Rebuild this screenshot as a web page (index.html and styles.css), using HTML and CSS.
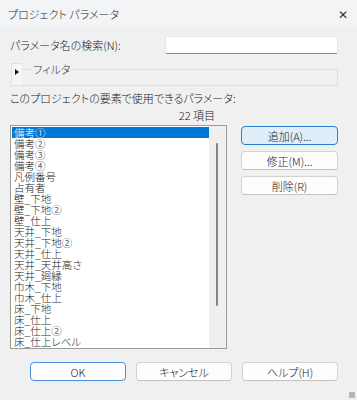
FILE: index.html
```html
<!DOCTYPE html>
<html lang="ja">
<head>
    <meta charset="UTF-8">
    <meta name="viewport" content="width=device-width, initial-scale=1.0">
    <title>プロジェクト パラメータ</title>
    <link rel="stylesheet" href="styles.css">
</head>
<body>

<div class="ventana">
    <div class="titulo">
        <span>プロジェクト パラメータ</span>
        <span class="cerrar">✕</span>
    </div>

    <div class="contenido">
        <div class="busqueda">
            <label>パラメータ名の検索(N):</label>
            <input type="text" class="campo">
        </div>

        <div class="filtro">
            <div class="toggle"><span class="flecha"></span></div>
            <div class="grupo">
                <span class="leyenda">フィルタ</span>
            </div>
        </div>

        <div class="etiqueta">このプロジェクトの要素で使用できるパラメータ:</div>
        <div class="cuenta">22 項目</div>

        <div class="principal">
            <div class="lista">
                <ul class="items">
                    <li class="sel">備考①</li>
                    <li>備考②</li>
                    <li>備考③</li>
                    <li>備考④</li>
                    <li>凡例番号</li>
                    <li>占有者</li>
                    <li>壁_下地</li>
                    <li>壁_下地②</li>
                    <li>壁_仕上</li>
                    <li>天井_下地</li>
                    <li>天井_下地②</li>
                    <li>天井_仕上</li>
                    <li>天井_天井高さ</li>
                    <li>天井_廻縁</li>
                    <li>巾木_下地</li>
                    <li>巾木_仕上</li>
                    <li>床_下地</li>
                    <li>床_仕上</li>
                    <li>床_仕上②</li>
                    <li>床_仕上レベル</li>
                </ul>
                <div class="scroll"><div class="thumb"></div></div>
            </div>

            <div class="acciones">
                <button class="btn activo">追加(A)...</button>
                <button class="btn">修正(M)...</button>
                <button class="btn">削除(R)</button>
            </div>
        </div>

        <div class="pie">
            <button class="btn defecto">OK</button>
            <button class="btn">キャンセル</button>
            <button class="btn">ヘルプ(H)</button>
        </div>
    </div>
    <div class="grip"></div>
</div>

</body>
</html>
```

FILE: styles.css
```css
body {
    margin: 0;
    font-family: "Noto Sans CJK JP", sans-serif;
    font-size: 11px;
    font-weight: 300;
    font-feature-settings: "palt";
    color: #1a1a1a;
    background-color: #f0f0f0;
}
.ventana {
    position: relative;
    width: 357px;
    height: 400px;
    background-color: #f0f0f0;
    overflow: hidden;
}
.titulo {
    height: 27px;
    display: flex;
    align-items: center;
    justify-content: space-between;
    padding: 0 8px;
    background-color: #f3f4f6;
    color: #2a2a2a;
}
.cerrar {
    font-size: 12px;
    color: #333;
    margin-right: 1px;
}
.contenido {
    padding: 0 19px 0 10px;
}
.busqueda {
    margin-top: 9px;
    display: flex;
    align-items: center;
    justify-content: space-between;
    height: 18px;
}
.campo {
    width: 173px;
    height: 18px;
    box-sizing: border-box;
    border: 1px solid #e5e5e5;
    border-bottom: 1px solid #868686;
    border-radius: 2px;
    background: #fff;
    margin: 0;
}
.filtro {
    margin-top: 9px;
    margin-left: 1px;
    display: flex;
    align-items: flex-start;
    height: 22px;
}
.toggle {
    width: 10px;
    height: 21px;
    border: 1px solid #e0e0e0;
    border-right: none;
    background-color: #f5f5f5;
    display: flex;
    align-items: center;
    justify-content: center;
}
.flecha {
    width: 0;
    height: 0;
    border-top: 3px solid transparent;
    border-bottom: 3px solid transparent;
    border-left: 4px solid #111;
    margin-top: -5px;
}
.grupo {
    flex: 1;
    height: 15px;
    margin-top: 6px;
    border: 1px solid #dcdcdc;
    border-left: none;
}
.leyenda {
    display: inline-block;
    margin-top: -7px;
    margin-left: 9px;
    padding: 0 2px;
    line-height: 12px;
    background-color: #f0f0f0;
    color: #333;
    vertical-align: top;
}
.etiqueta {
    margin-top: 7px;
    line-height: 12px;
}
.cuenta {
    width: 217px;
    text-align: right;
    padding-right: 12px;
    box-sizing: border-box;
    margin-top: 5px;
    line-height: 12px;
}
.principal {
    margin-top: 4px;
    display: flex;
    align-items: flex-start;
}
.lista {
    width: 217px;
    height: 224px;
    box-sizing: border-box;
    border: 1px solid #9a9a9a;
    background-color: #fff;
    display: flex;
    overflow: hidden;
}
.items {
    list-style: none;
    margin: 0;
    padding: 1px 0 0 1px;
    flex: 1;
    font-size: 10.5px;
}
.items li {
    height: 11px;
    line-height: 11px;
    padding-left: 2px;
    white-space: nowrap;
}
.items li.sel {
    background-color: #0078d7;
    color: #fff;
}
.scroll {
    width: 17px;
    background-color: #efefef;
    position: relative;
}
.thumb {
    position: absolute;
    left: 7px;
    top: 17px;
    width: 2px;
    height: 163px;
    background-color: #858585;
    border-radius: 1px;
}
.acciones {
    margin-left: 14px;
    margin-top: 1px;
    display: flex;
    flex-direction: column;
    gap: 6px;
}
.btn {
    width: 97px;
    height: 19px;
    padding: 0;
    font-family: "Noto Sans CJK JP", sans-serif;
    font-size: 11px;
    font-weight: 300;
    font-feature-settings: "palt";
    color: #1a1a1a;
    background-color: #fdfdfd;
    border: 1px solid #d3d3d3;
    border-bottom-color: #c2c2c2;
    border-radius: 4px;
}
.btn.activo {
    background-color: #e0eef9;
    border-color: #2a7fd4;
}
.btn.defecto {
    border-color: #4a90d9;
}
.pie {
    margin-top: 13px;
    display: flex;
    justify-content: flex-end;
    gap: 10px;
}
.pie .btn {
    width: 96px;
}
.grip {
    position: absolute;
    right: 2px;
    bottom: 2px;
    width: 6px;
    height: 6px;
    background-image: radial-gradient(#b5b5b5 0.8px, transparent 1px);
    background-size: 2px 2px;
}
```
